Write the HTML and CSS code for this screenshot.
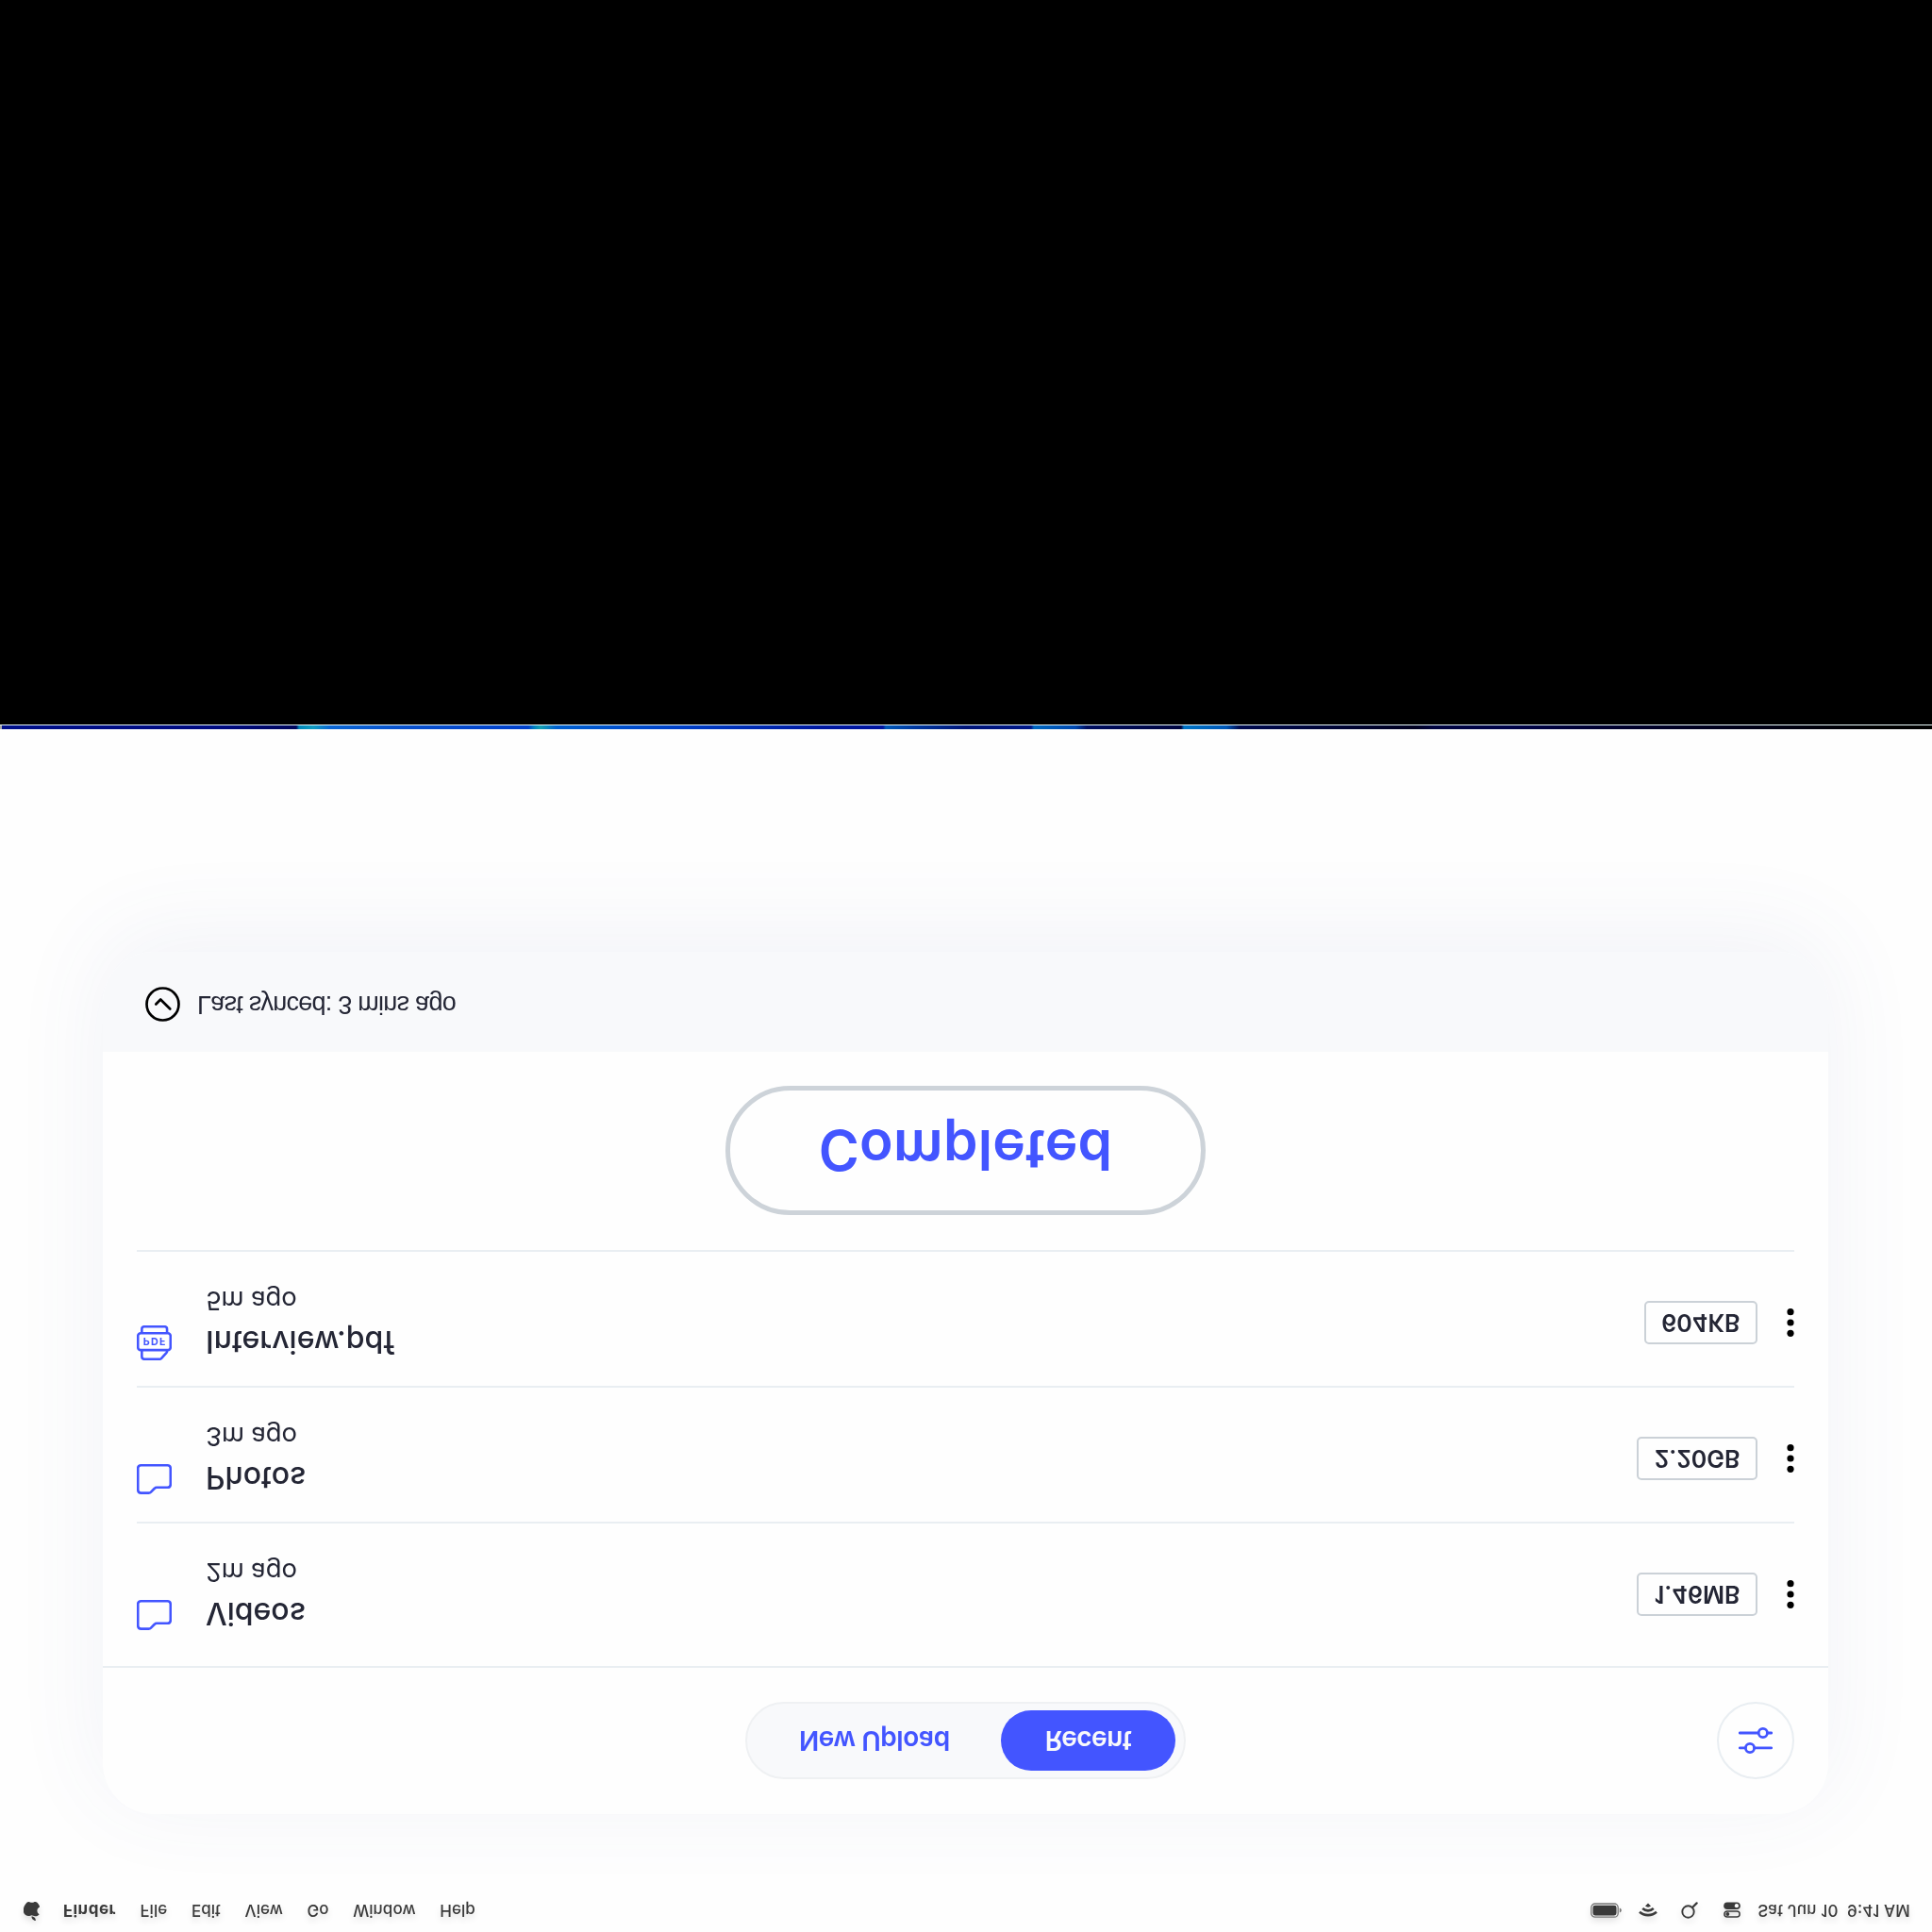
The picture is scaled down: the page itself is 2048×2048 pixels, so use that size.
FILE: index.html
```html
<!DOCTYPE html>
<html lang="en">
<head>
<meta charset="utf-8">
<title>Uploads</title>
<link rel="stylesheet" href="styles.css">
</head>
<body>
<div class="page">
  <div class="screen">
    <header class="menubar">
      <svg class="apple" width="17" height="20" viewBox="2.5 0 19 24" preserveAspectRatio="none" fill="currentColor"><path d="M12.152 6.896c-.948 0-2.415-1.078-3.96-1.04-2.04.027-3.91 1.183-4.961 3.014-2.117 3.675-.546 9.103 1.519 12.09 1.013 1.454 2.208 3.09 3.792 3.039 1.52-.065 2.09-.987 3.935-.987 1.831 0 2.35.987 3.96.948 1.637-.026 2.676-1.48 3.676-2.948 1.156-1.688 1.636-3.325 1.662-3.415-.039-.013-3.182-1.221-3.22-4.857-.026-3.04 2.48-4.494 2.597-4.559-1.429-2.09-3.623-2.324-4.39-2.376-2-.156-3.675 1.09-4.61 1.09zM15.53 3.83c.843-1.012 1.4-2.427 1.245-3.83-1.207.052-2.662.805-3.532 1.818-.78.896-1.454 2.338-1.273 3.714 1.338.104 2.715-.688 3.559-1.701"/></svg>
      <nav class="menus">
        <span class="app">Finder</span><span>File</span><span>Edit</span><span>View</span><span>Go</span><span>Window</span><span>Help</span>
      </nav>
      <div class="status">
        <svg width="34" height="16" viewBox="0 0 34 16"><rect x=".8" y=".8" width="28.4" height="14.2" rx="4" fill="none" stroke="#777" stroke-width="1.3"/><rect x="2.5" y="2.5" width="25" height="10.8" rx="2.4" fill="currentColor"/><path d="M30.8 5.4c1.4.5 2 1.4 2 2.5s-.6 2-2 2.500z" fill="#777"/></svg>
        <svg width="20" height="15" viewBox="0 0 20 15" fill="none" stroke="currentColor" stroke-width="2.6"><path d="M1 5.200C5.800.8 14.200.8 19 5.200M4.200 9C7.600 5.900 12.400 5.900 15.800 9"/><path d="M10 14.500 7 11.500C8.700 10 11.300 10 13 11.500z" fill="currentColor" stroke="none"/></svg>
        <svg width="18" height="18" viewBox="0 0 18 18" fill="none" stroke="currentColor" stroke-width="1.900" stroke-linecap="round"><circle cx="7.500" cy="7.500" r="6.200"/><path d="M12 12l4.600 4.600" stroke-width="2.200"/></svg>
        <svg width="18" height="17" viewBox="0 0 18 17"><rect x=".9" y="1" width="16.200" height="6" rx="3" fill="none" stroke="currentColor" stroke-width="1.500"/><circle cx="4.300" cy="4" r="2" fill="currentColor"/><rect x=".2" y="9" width="17.600" height="7.600" rx="3.800" fill="currentColor"/><circle cx="13.900" cy="12.800" r="2.100" fill="#fff"/></svg>
        <span class="clock">Sat Jun 10&nbsp; 9:41 AM</span>
      </div>
    </header>

    <main class="card">
      <div class="card-head">
        <div class="tabs">
          <span class="tab">New Upload</span>
          <span class="tab active">Recent</span>
        </div>
        <div class="settings">
          <svg width="36" height="28" viewBox="0 0 36 28" fill="none" stroke="#4355ff" stroke-width="2.800" stroke-linecap="round"><path d="M1.300 6.200H7.200M16.700 6.200H34.700M1.300 22H20.800M30.800 22H34.700"/><circle cx="12" cy="6" r="4.600"/><circle cx="25.800" cy="22" r="4.600"/></svg>
        </div>
      </div>

      <ul class="files">
        <li class="file">
          <svg class="icon" viewBox="0 0 36 36"><path d="M1.200 29.800V6.500q0-3.200 3.200-3.200H12.200q1.500 0 2.400 1L18.300 8q.9 1 2.200 1H31.600q3.200 0 3.200 3.200V28.600q0 3.200-3.200 3.200H4.400q-3.200 0-3.200-3.200z"/></svg>
          <div class="info"><div class="name">Videos</div><div class="time">2m ago</div></div>
          <span class="size">1.46MB</span>
          <svg class="dots" viewBox="0 0 8 30"><circle cx="4" cy="3.700" r="3.600"/><circle cx="4" cy="15" r="3.600"/><circle cx="4" cy="26.300" r="3.600"/></svg>
        </li>
        <li class="file">
          <svg class="icon" viewBox="0 0 36 36"><path d="M1.200 29.800V6.500q0-3.200 3.200-3.200H12.200q1.500 0 2.400 1L18.300 8q.9 1 2.200 1H31.600q3.200 0 3.200 3.200V28.600q0 3.200-3.200 3.200H4.400q-3.200 0-3.200-3.200z"/></svg>
          <div class="info"><div class="name">Photos</div><div class="time">3m ago</div></div>
          <span class="size">2.20GB</span>
          <svg class="dots" viewBox="0 0 8 30"><circle cx="4" cy="3.700" r="3.600"/><circle cx="4" cy="15" r="3.600"/><circle cx="4" cy="26.300" r="3.600"/></svg>
        </li>
        <li class="file">
          <svg class="icon" viewBox="0 0 36 36"><path d="M5.200 10.400V3.800q0-2.600 2.600-2.600H23.800q.8 0 1.400.6L30.700 8q.5.600.5 1.300v1.100M5.200 28.200v4q0 2.600 2.600 2.600H28.600q2.600 0 2.600-2.600v-4"/><rect x="1.200" y="10.600" width="33.600" height="17.400" rx="2.800"/><text x="6.600" y="23.500">PDF</text></svg>
          <div class="info"><div class="name">Interview.pdf</div><div class="time">5m ago</div></div>
          <span class="size">604KB</span>
          <svg class="dots" viewBox="0 0 8 30"><circle cx="4" cy="3.700" r="3.600"/><circle cx="4" cy="15" r="3.600"/><circle cx="4" cy="26.300" r="3.600"/></svg>
        </li>
      </ul>

      <div class="action"><span class="completed">Completed</span></div>

      <footer class="sync">
        <svg width="37" height="37" viewBox="0 0 37 37" fill="none" stroke="#000" stroke-width="2.700" stroke-linecap="round" stroke-linejoin="round"><circle cx="18.500" cy="18.500" r="17"/><path d="M11.300 18.500 16.200 23.500 26.300 13.500"/></svg>
        <span>Last synced: 3 mins ago</span>
      </footer>
    </main>
  </div>
  <div class="wallpaper"></div>
</div>
</body>
</html>
```
FILE: styles.css
```css
* { box-sizing: border-box; }
body { margin: 0; background: #000; font-family: Inter, "Liberation Sans", sans-serif; }

.page {
  width: 2048px;
  height: 2048px;
  display: flex;
  flex-direction: column;
  overflow: hidden;
  background: #000;
  transform: scaleY(-1);
}
.screen { height: 1275px; background: #fefefe; overflow: hidden; }

.menubar {
  height: 46px;
  display: flex;
  align-items: center;
  padding: 0 23px 0 25px;
  color: #3a3a3a;
  font-size: 17px;
  line-height: 20px;
  font-weight: 500;
  filter: drop-shadow(0 -4px 3px rgba(0, 0, 0, .12));
}
.apple { margin-bottom: 2px; }
.menus { display: flex; gap: 25.600px; margin-left: 25px; letter-spacing: .05px; }
.app { font-weight: 700; letter-spacing: .5px; }
.status { margin-left: auto; display: flex; align-items: center; }
.status svg:nth-child(2) { margin-left: 17px; }
.status svg:nth-child(3) { margin-left: 25px; }
.status svg:nth-child(4) { margin-left: 27px; }
.clock { margin-left: 18px; letter-spacing: .170px; white-space: nowrap; }

.card {
  width: 1829px;
  height: 914px;
  margin: 79px 0 0 109px;
  border-radius: 54px;
  background: #fefefe;
  box-shadow: 0 16px 100px rgba(80, 100, 160, .075);
  display: flex;
  flex-direction: column;
}
.card-head {
  height: 157px;
  flex: none;
  display: grid;
  grid-template-columns: 1fr auto 1fr;
  align-items: center;
  padding: 0 36px;
  border-bottom: 2px solid #e9eef2;
}
.tabs {
  grid-column: 2;
  width: 467px;
  height: 82px;
  display: flex;
  align-items: center;
  padding: 0 9px 0 55px;
  justify-content: space-between;
  border: 2px solid #eff1f3;
  border-radius: 41px;
  background: #f8f9fb;
  font-size: 28px;
  font-weight: 600;
  letter-spacing: -.45px;
  color: #4355ff;
}
.tab.active {
  width: 185px;
  height: 64px;
  line-height: 64px;
  border-radius: 32px;
  text-align: center;
  background: #4355ff;
  color: #f8f9fb;
}
.settings {
  width: 82px;
  height: 82px;
  justify-self: end;
  display: flex;
  align-items: center;
  justify-content: center;
  border: 2px solid #e9eef2;
  border-radius: 50%;
}

.files { list-style: none; margin: 0; padding: 9px 36px 0; }
.file {
  height: 144px;
  padding: 27px 0 36px;
  display: flex;
  align-items: center;
  border-bottom: 2px solid #e9eef2;
  color: #242635;
}
.icon { width: 37px; height: 37px; align-self: flex-start; fill: none; stroke: #4355ff; stroke-width: 2.500; stroke-linejoin: round; }
.icon text { fill: #4355ff; stroke: none; font: 700 10.500px Inter, sans-serif; letter-spacing: 1.200px; }
.info { margin: 2px 0 0 36px; flex: 1; }
.name { font-size: 32px; line-height: 38px; font-weight: 500; }
.time { margin-top: 8px; font-size: 27.500px; line-height: 33px; letter-spacing: -.1px; }
.size {
  height: 46px;
  line-height: 42px;
  padding: 0 16.500px;
  border: 2px solid #cbd1d7;
  border-radius: 5px;
  font-size: 25px;
  font-weight: 600;
}
.dots { width: 8px; height: 30px; margin-left: 31px; }

.action { flex: 1; display: flex; align-items: center; justify-content: center; }
.completed {
  width: 509px;
  height: 137px;
  line-height: 127px;
  text-align: center;
  border: 5px solid #cdd3d9;
  border-radius: 68.500px;
  font-size: 58.500px;
  font-weight: 600;
  letter-spacing: .3px;
  color: #4355ff;
}
.sync {
  height: 106px;
  flex: none;
  display: flex;
  align-items: center;
  gap: 18px;
  padding: 0 0 6px 45px;
  border-radius: 0 0 54px 54px;
  background: #f8f9fb;
  font-family: "Liberation Sans", Arial, sans-serif;
  font-size: 27px;
  letter-spacing: -.75px;
  color: #242635;
}

.wallpaper {
  height: 5px;
  border-bottom: 1px solid #e8fafa;
  background: linear-gradient(90deg, #aaa 0 2px, #000f8a 2px, #000a80 240px, #00065c 314px, #0086b8 317px, #109cc0 332px, #0a66d4 350px, #0850cc 430px, #0040cc 560px, #0080c0 566px, #14a0b0 573px, #0060d0 590px, #0040c8 720px, #0018a0 870px, #0014a0 936px, #0058b8 939px, #0038a0 970px, #001478 1024px, #00188a 1093px, #0068c0 1096px, #0048b0 1140px, #000e60 1152px, #000540 1252px, #0074c4 1255px, #0058b8 1300px, #000a50 1314px, #000020 1500px, #000340 1520px, #00034a 1600px, #000030 1700px, #000018 1850px, #000 1990px);
}
```
